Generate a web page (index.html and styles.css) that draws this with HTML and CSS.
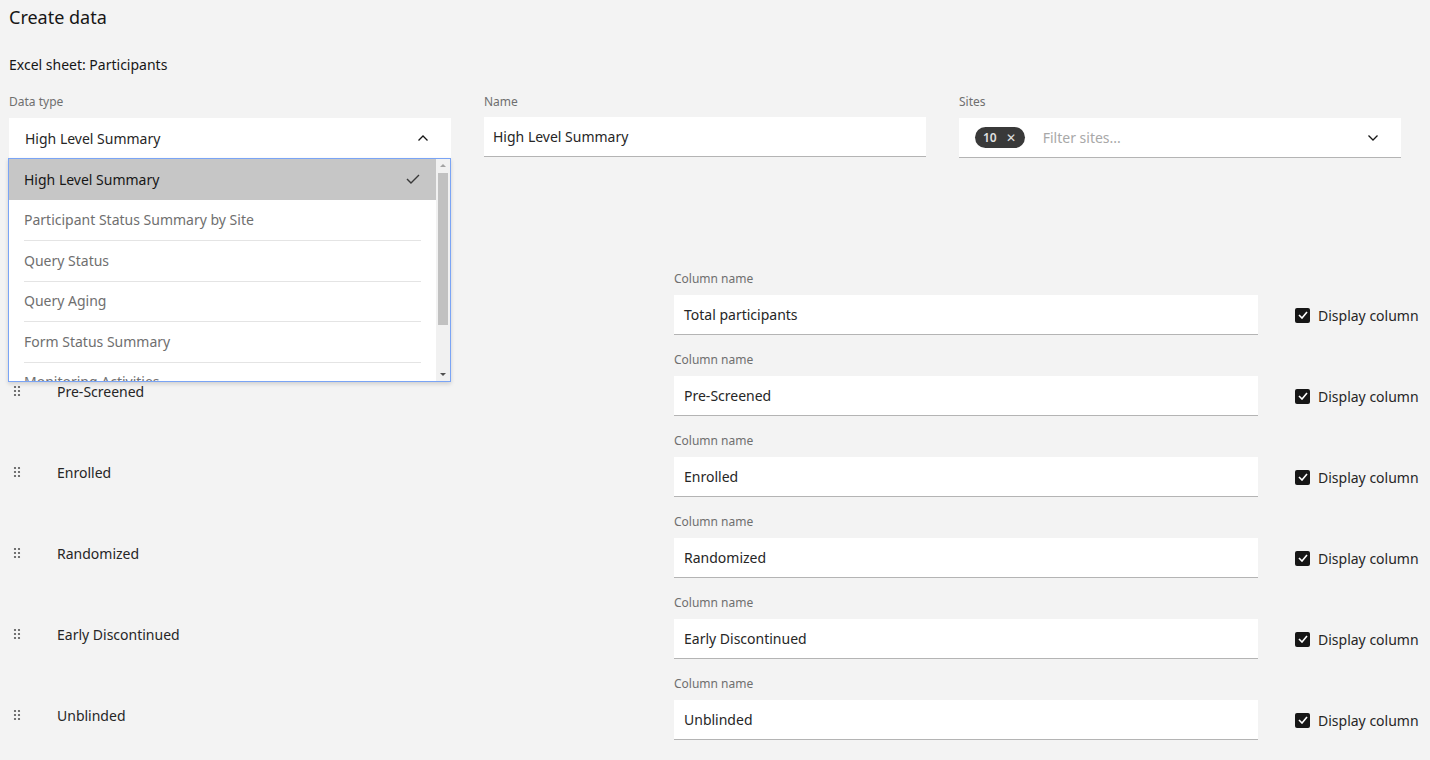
FILE: index.html
```html
<!DOCTYPE html>
<html>
<head>
<meta charset="utf-8">
<link rel="stylesheet" href="styles.css">
</head>
<body>
<div class="page">
  <h1 class="title">Create data</h1>
  <div class="sheet">Excel sheet: Participants</div>

  <div class="fields">
    <div class="field-group">
      <div class="label">Data type</div>
      <div class="select open">
        <span class="value">High Level Summary</span>
        <svg class="chev" width="12" height="8" viewBox="0 0 12 8"><path d="M1.5 6.5 L6 2 L10.5 6.5" fill="none" stroke="#161616" stroke-width="1.3"/></svg>
        <div class="menu">
          <div class="menu-list">
            <div class="item selected"><span>High Level Summary</span>
              <svg width="14" height="10" viewBox="0 0 14 10"><path d="M1 5 L5 9 L13 1" fill="none" stroke="#393939" stroke-width="1.4"/></svg>
            </div>
            <div class="item"><span>Participant Status Summary by Site</span></div>
            <div class="item"><span>Query Status</span></div>
            <div class="item"><span>Query Aging</span></div>
            <div class="item"><span>Form Status Summary</span></div>
            <div class="item"><span>Monitoring Activities</span></div>
          </div>
          <div class="scrollbar">
            <div class="arrow up"></div>
            <div class="track"><div class="thumb"></div></div>
            <div class="arrow down"></div>
          </div>
        </div>
      </div>
    </div>

    <div class="field-group">
      <div class="label">Name</div>
      <div class="input name-input">High Level Summary</div>
    </div>

    <div class="field-group">
      <div class="label">Sites</div>
      <div class="select">
        <span class="tag"><span class="tag-num">10</span><span class="tag-x">✕</span></span>
        <span class="placeholder">Filter sites...</span>
        <svg class="chev" width="12" height="8" viewBox="0 0 12 8"><path d="M1.5 1.5 L6 6 L10.5 1.5" fill="none" stroke="#161616" stroke-width="1.3"/></svg>
      </div>
    </div>
  </div>

  <div class="rows">
    <div class="row">
      <div class="row-left"><svg class="handle" width="8" height="12" viewBox="0 0 8 12"><circle cx="2" cy="2" r="1.1"/><circle cx="6" cy="2" r="1.1"/><circle cx="2" cy="6" r="1.1"/><circle cx="6" cy="6" r="1.1"/><circle cx="2" cy="10" r="1.1"/><circle cx="6" cy="10" r="1.1"/></svg><span class="row-label">Total participants</span></div>
      <div class="row-right">
        <div class="label">Column name</div>
        <div class="row-fields"><div class="input col-input">Total participants</div><label class="check"><span class="box"><svg width="10" height="8" viewBox="0 0 10 8"><path d="M1 4 L4 7 L9 1" fill="none" stroke="#fff" stroke-width="1.6"/></svg></span>Display column</label></div>
      </div>
    </div>
    <div class="row">
      <div class="row-left"><svg class="handle" width="8" height="12" viewBox="0 0 8 12"><circle cx="2" cy="2" r="1.1"/><circle cx="6" cy="2" r="1.1"/><circle cx="2" cy="6" r="1.1"/><circle cx="6" cy="6" r="1.1"/><circle cx="2" cy="10" r="1.1"/><circle cx="6" cy="10" r="1.1"/></svg><span class="row-label">Pre-Screened</span></div>
      <div class="row-right">
        <div class="label">Column name</div>
        <div class="row-fields"><div class="input col-input">Pre-Screened</div><label class="check"><span class="box"><svg width="10" height="8" viewBox="0 0 10 8"><path d="M1 4 L4 7 L9 1" fill="none" stroke="#fff" stroke-width="1.6"/></svg></span>Display column</label></div>
      </div>
    </div>
    <div class="row">
      <div class="row-left"><svg class="handle" width="8" height="12" viewBox="0 0 8 12"><circle cx="2" cy="2" r="1.1"/><circle cx="6" cy="2" r="1.1"/><circle cx="2" cy="6" r="1.1"/><circle cx="6" cy="6" r="1.1"/><circle cx="2" cy="10" r="1.1"/><circle cx="6" cy="10" r="1.1"/></svg><span class="row-label">Enrolled</span></div>
      <div class="row-right">
        <div class="label">Column name</div>
        <div class="row-fields"><div class="input col-input">Enrolled</div><label class="check"><span class="box"><svg width="10" height="8" viewBox="0 0 10 8"><path d="M1 4 L4 7 L9 1" fill="none" stroke="#fff" stroke-width="1.6"/></svg></span>Display column</label></div>
      </div>
    </div>
    <div class="row">
      <div class="row-left"><svg class="handle" width="8" height="12" viewBox="0 0 8 12"><circle cx="2" cy="2" r="1.1"/><circle cx="6" cy="2" r="1.1"/><circle cx="2" cy="6" r="1.1"/><circle cx="6" cy="6" r="1.1"/><circle cx="2" cy="10" r="1.1"/><circle cx="6" cy="10" r="1.1"/></svg><span class="row-label">Randomized</span></div>
      <div class="row-right">
        <div class="label">Column name</div>
        <div class="row-fields"><div class="input col-input">Randomized</div><label class="check"><span class="box"><svg width="10" height="8" viewBox="0 0 10 8"><path d="M1 4 L4 7 L9 1" fill="none" stroke="#fff" stroke-width="1.6"/></svg></span>Display column</label></div>
      </div>
    </div>
    <div class="row">
      <div class="row-left"><svg class="handle" width="8" height="12" viewBox="0 0 8 12"><circle cx="2" cy="2" r="1.1"/><circle cx="6" cy="2" r="1.1"/><circle cx="2" cy="6" r="1.1"/><circle cx="6" cy="6" r="1.1"/><circle cx="2" cy="10" r="1.1"/><circle cx="6" cy="10" r="1.1"/></svg><span class="row-label">Early Discontinued</span></div>
      <div class="row-right">
        <div class="label">Column name</div>
        <div class="row-fields"><div class="input col-input">Early Discontinued</div><label class="check"><span class="box"><svg width="10" height="8" viewBox="0 0 10 8"><path d="M1 4 L4 7 L9 1" fill="none" stroke="#fff" stroke-width="1.6"/></svg></span>Display column</label></div>
      </div>
    </div>
    <div class="row">
      <div class="row-left"><svg class="handle" width="8" height="12" viewBox="0 0 8 12"><circle cx="2" cy="2" r="1.1"/><circle cx="6" cy="2" r="1.1"/><circle cx="2" cy="6" r="1.1"/><circle cx="6" cy="6" r="1.1"/><circle cx="2" cy="10" r="1.1"/><circle cx="6" cy="10" r="1.1"/></svg><span class="row-label">Unblinded</span></div>
      <div class="row-right">
        <div class="label">Column name</div>
        <div class="row-fields"><div class="input col-input">Unblinded</div><label class="check"><span class="box"><svg width="10" height="8" viewBox="0 0 10 8"><path d="M1 4 L4 7 L9 1" fill="none" stroke="#fff" stroke-width="1.6"/></svg></span>Display column</label></div>
      </div>
    </div>
  </div>
</div>
</body>
</html>
```

FILE: styles.css
```css
html, body {
  margin: 0;
  padding: 0;
  background: #f3f3f3;
  font-family: "Noto Sans", "Open Sans", sans-serif;
  color: #161616;
}

.page {
  padding: 0 9px;
  height: 760px;
  overflow: hidden;
}

.title {
  margin: 0;
  padding-top: 5px;
  font-size: 18px;
  font-weight: 400;
  line-height: 24px;
  color: #161616;
}

.sheet {
  margin-top: 27px;
  font-size: 14px;
  line-height: 18px;
  color: #161616;
}

.fields {
  display: grid;
  grid-template-columns: repeat(3, 442px);
  column-gap: 33px;
  margin-top: 20px;
}

.label {
  font-size: 12px;
  line-height: 16px;
  color: #6f6f6f;
  margin-bottom: 8px;
}

.select, .input {
  position: relative;
  height: 40px;
  background: #fff;
  border-bottom: 1px solid #b4b4b4;
  box-sizing: border-box;
  display: flex;
  align-items: center;
  padding: 0 16px;
  font-size: 14px;
  color: #262626;
}

.select .value {
  flex: 1;
}

.chev {
  position: absolute;
  right: 22px;
  top: 16px;
}

.select.open {
  border-bottom: none;
}

.name-input {
  padding-left: 9px;
  margin-top: -1px;
}

.menu {
  position: absolute;
  left: -1px;
  top: 40px;
  width: 443px;
  height: 224px;
  box-sizing: border-box;
  border: 1px solid #7aa4f5;
  background: #fff;
  display: flex;
  overflow: hidden;
  z-index: 5;
  box-shadow: 0 2px 4px rgba(0,0,0,0.15);
}

.menu-list {
  flex: 1;
}

.item {
  height: 40.5px;
  display: flex;
  align-items: center;
  justify-content: space-between;
  padding: 0 16px 0 15px;
  font-size: 14px;
  color: #6f6f6f;
  position: relative;
}

.item + .item::before {
  content: "";
  position: absolute;
  top: 0;
  left: 15px;
  right: 15px;
  height: 1px;
  background: #e4e4e4;
}

.item.selected {
  background: #c6c6c6;
  color: #161616;
}

.item.selected + .item::before {
  display: none;
}

.scrollbar {
  width: 14px;
  background: #f1f1f1;
  display: flex;
  flex-direction: column;
}

.arrow {
  height: 14px;
  position: relative;
}

.arrow::after {
  content: "";
  position: absolute;
  left: 4px;
  width: 0;
  height: 0;
  border-left: 3px solid transparent;
  border-right: 3px solid transparent;
}

.arrow.up::after {
  top: 5px;
  border-bottom: 3px solid #a3a3a3;
}

.arrow.down::after {
  top: 6px;
  border-top: 3px solid #505050;
}

.track {
  flex: 1;
  padding: 0 2px;
}

.thumb {
  height: 152px;
  background: #c1c1c1;
}

.tag {
  display: inline-flex;
  align-items: center;
  height: 21px;
  padding: 0 9px 0 8px;
  background: #393939;
  border-radius: 11px;
  color: #e0e0e0;
  font-size: 12px;
  font-weight: 600;
  gap: 9px;
}

.tag-x {
  font-size: 12px;
  font-weight: 400;
}

.placeholder {
  margin-left: 18px;
  color: #a8a8a8;
}

.rows {
  margin-top: 113px;
}

.row {
  display: flex;
}

.row-left {
  width: 665px;
  display: flex;
  align-items: center;
  padding-bottom: 3px;
  box-sizing: border-box;
}

.handle {
  margin-left: 4px;
  fill: #525252;
}

.row-label {
  margin-left: 36px;
  font-size: 14px;
  color: #262626;
}

.row-right {
  padding-bottom: 17px;
}

.row-fields {
  display: flex;
  align-items: center;
}

.col-input {
  width: 584px;
  padding-left: 10px;
}

.check {
  display: flex;
  align-items: center;
  margin-left: 37px;
  font-size: 14px;
  color: #262626;
}

.box {
  width: 15px;
  height: 15px;
  background: #161616;
  border-radius: 2px;
  display: flex;
  align-items: center;
  justify-content: center;
  margin-right: 8px;
}
```
